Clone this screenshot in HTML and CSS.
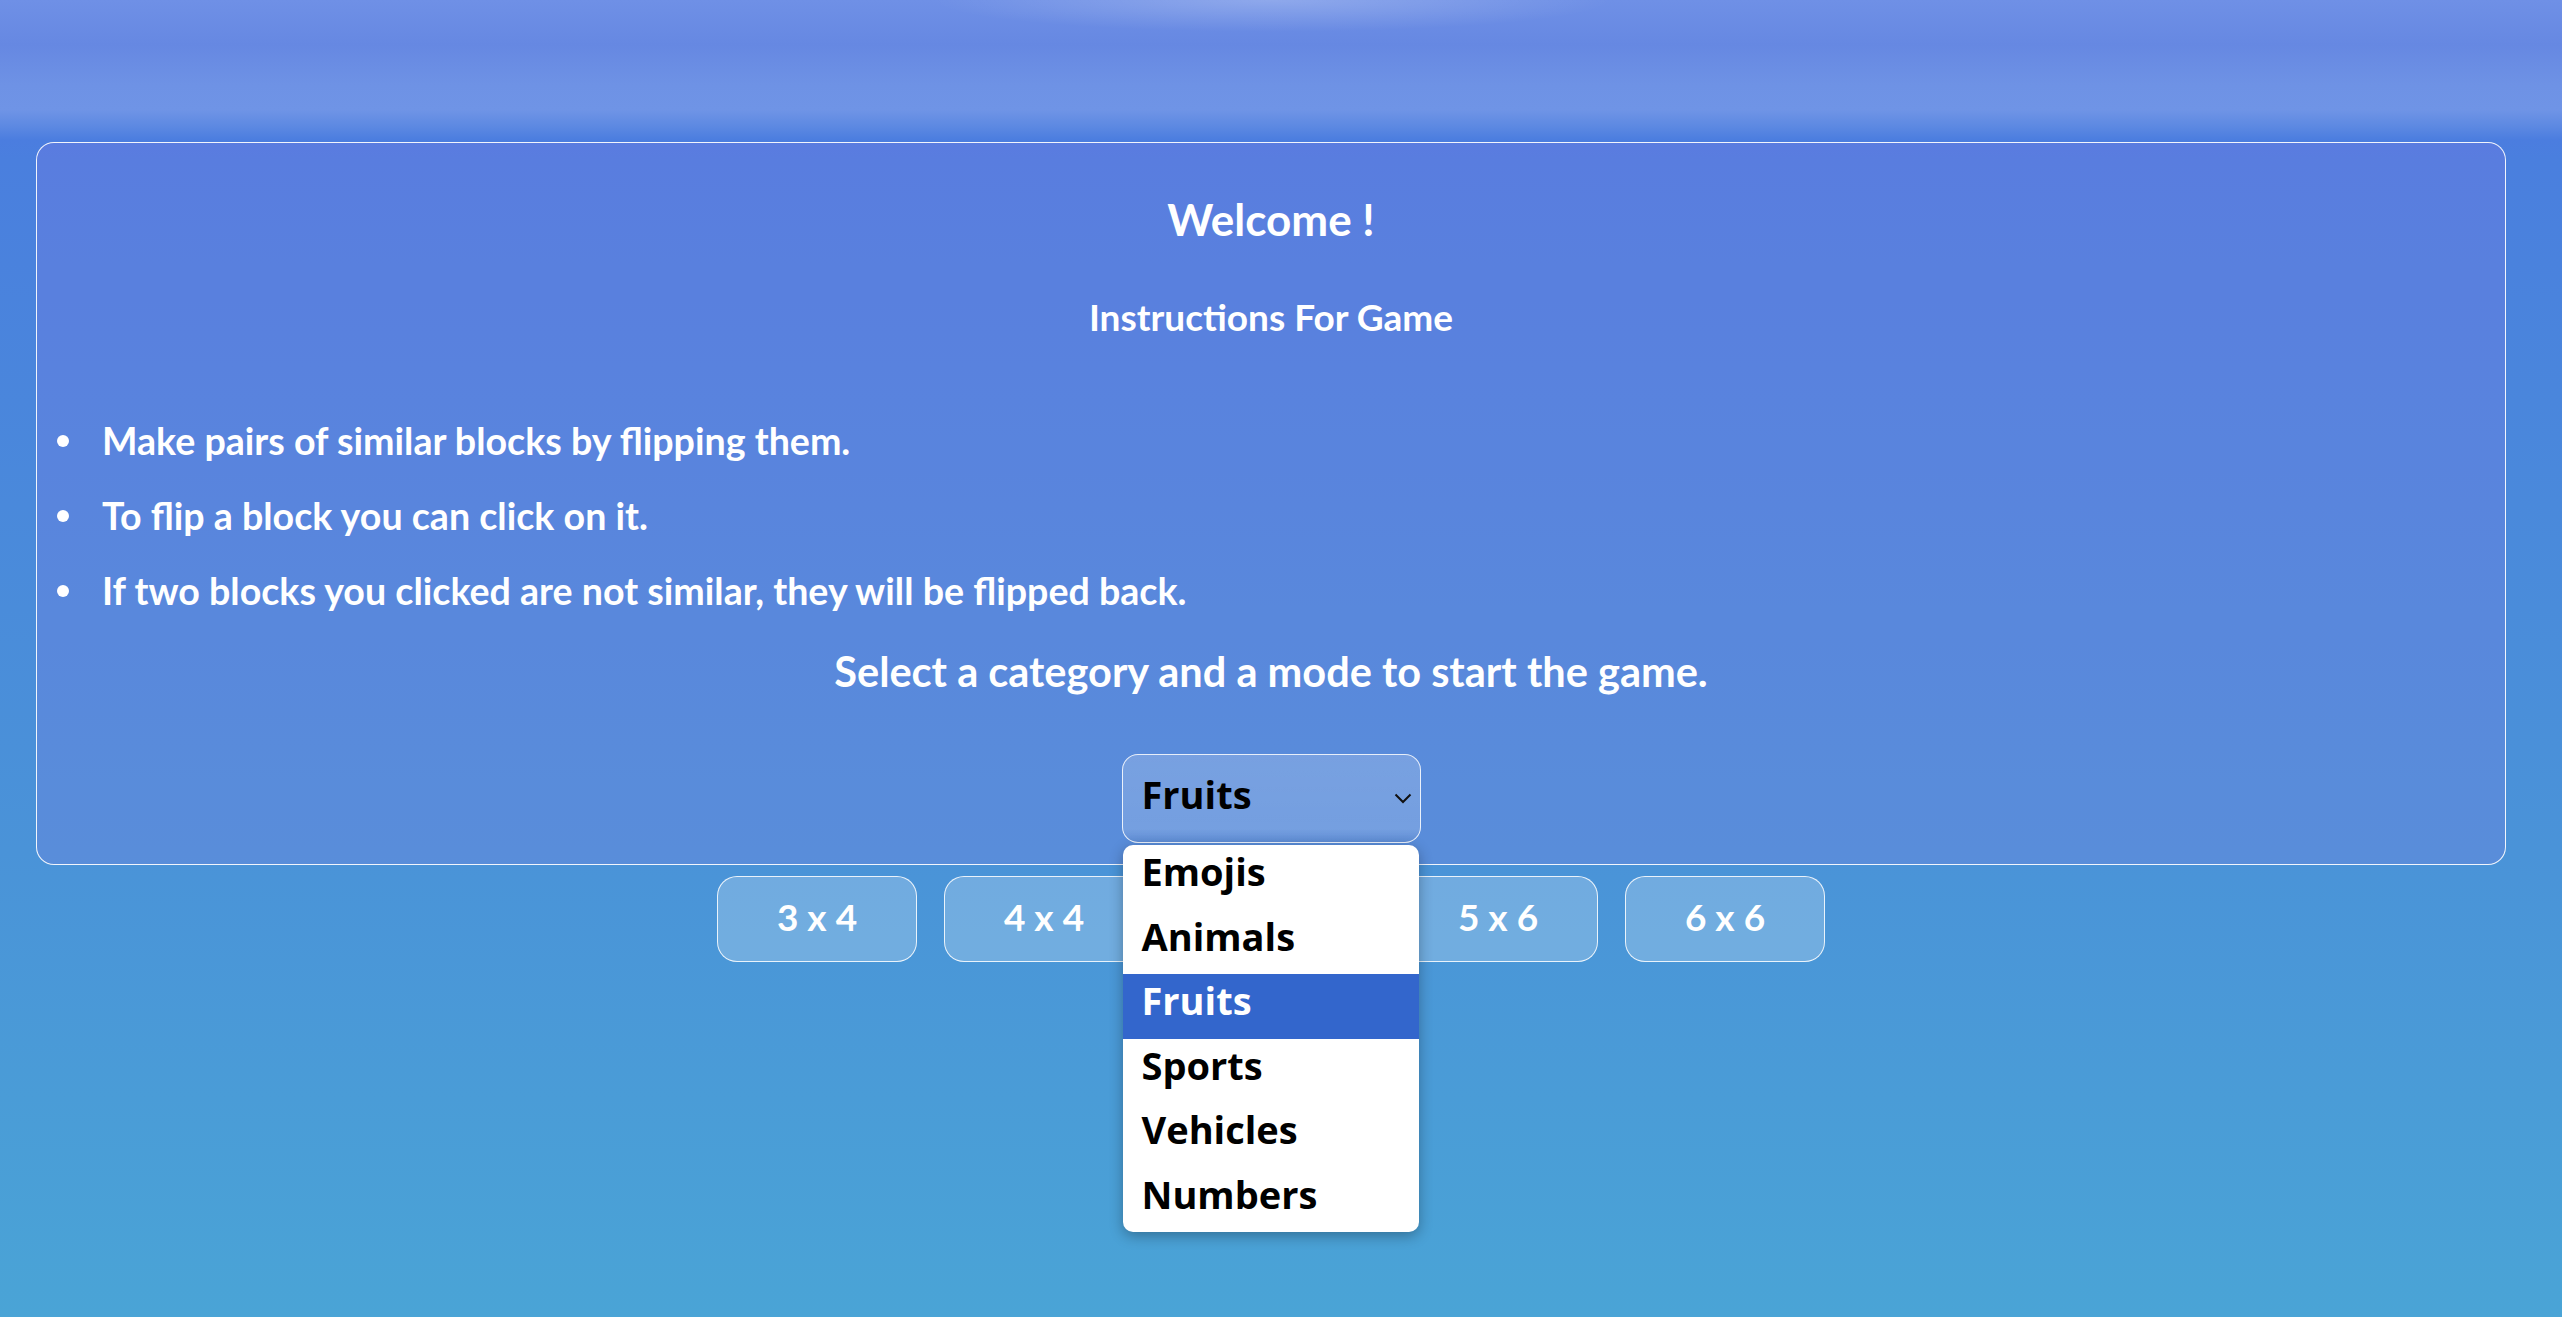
FILE: index.html
```html
<!DOCTYPE html>
<html lang="en">
<head>
<meta charset="utf-8">
<title>Memory Game</title>
<link rel="stylesheet" href="styles.css">
</head>
<body>
<main class="card">
  <h1 class="title">Welcome !</h1>
  <h3 class="subtitle">Instructions For Game</h3>
  <ul class="rules">
    <li>Make pairs of similar blocks by flipping them.</li>
    <li>To flip a block you can click on it.</li>
    <li>If two blocks you clicked are not similar, they will be flipped back.</li>
  </ul>
  <p class="prompt">Select a category and a mode to start the game.</p>
  <div class="picker">
    <div class="select">
      <span class="select-value">Fruits</span>
      <svg class="chevron" width="18" height="11" viewBox="0 0 18 11"><path d="M1.5 1.5 L9 9 L16.5 1.5" fill="none" stroke="#111" stroke-width="2"/></svg>
    </div>
    <div class="options">
      <div class="option">Emojis</div>
      <div class="option">Animals</div>
      <div class="option selected">Fruits</div>
      <div class="option">Sports</div>
      <div class="option">Vehicles</div>
      <div class="option">Numbers</div>
    </div>
  </div>
</main>
<div class="modes">
  <button class="mode">3 x 4</button>
  <button class="mode">4 x 4</button>
  <button class="mode">4 x 5</button>
  <button class="mode">5 x 6</button>
  <button class="mode">6 x 6</button>
</div>
</body>
</html>
```
FILE: styles.css
```css
html, body {
  margin: 0;
  height: 100%;
}
body {
  font-family: Lato, "Open Sans", sans-serif;
  font-weight: 700;
  color: #fff;
  overflow: hidden;
  background:
    radial-gradient(ellipse 340px 32px at 1272px 0px, rgba(255,255,255,0.22), rgba(255,255,255,0) 100%),
    linear-gradient(to bottom, #6f90e6 0px, #6688e2 45px, #6e92e5 85px, #6f94e6 110px, #5d89e2 126px, #4b7ddf 140px, #4a7fde 160px, #4a93d8 850px, #4aa4d6 1317px);
  background-repeat: no-repeat;
}
.card {
  box-sizing: border-box;
  width: 2470px;
  height: 723px;
  margin: 142px 0 0 36px;
  padding-top: 46px;
  border: 1.5px solid rgba(255,255,255,0.92);
  border-radius: 18px;
  background: rgba(150,120,230,0.2);
}
.title {
  margin: 0;
  font-size: 44px;
  line-height: 60px;
  text-align: center;
  font-weight: 700;
}
.subtitle {
  margin: 43px 0 0;
  font-size: 37px;
  line-height: 50px;
  text-align: center;
  font-weight: 700;
}
.rules {
  margin: 61px 0 0;
  padding: 0;
  list-style: none;
  font-size: 37.6px;
  line-height: 75px;
}
.rules li {
  position: relative;
  padding-left: 65px;
}
.rules li::before {
  content: "";
  position: absolute;
  left: 20px;
  top: 32px;
  width: 12px;
  height: 12px;
  border-radius: 50%;
  background: #fff;
}
.prompt {
  margin: 18px 0 0;
  font-size: 41.5px;
  line-height: 50px;
  text-align: center;
}
.picker {
  position: relative;
  width: 299px;
  margin: 58px auto 0;
}
.select {
  box-sizing: border-box;
  height: 89px;
  display: flex;
  align-items: center;
  justify-content: space-between;
  padding: 0 8px 10px 19px;
  border: 1px solid rgba(255,255,255,0.85);
  border-radius: 16px;
  background: linear-gradient(to bottom, rgba(255,255,255,0.19), rgba(255,255,255,0.17) 85%, rgba(120,140,190,0.2));
  color: #000;
  font-family: "Open Sans", Lato, sans-serif;
  font-size: 38px;
}
.chevron {
  margin-top: 10px;
}
.options {
  position: absolute;
  left: 1px;
  top: 91px;
  width: 296px;
  background: #fff;
  border-radius: 10px;
  overflow: hidden;
  box-shadow: 0 4px 14px rgba(0,0,0,0.3);
  z-index: 5;
}
.option {
  box-sizing: border-box;
  height: 64.5px;
  line-height: 52px;
  padding: 0 0 12.5px 19px;
  color: #000;
  font-family: "Open Sans", Lato, sans-serif;
  font-size: 38px;
}
.option.selected {
  background: #3366cc;
  color: #fff;
}
.modes {
  box-sizing: border-box;
  width: 2470px;
  margin: 11px 0 0 36px;
  display: flex;
  justify-content: center;
  gap: 27px;
}
.mode {
  box-sizing: border-box;
  width: 200px;
  height: 86px;
  padding: 0 0 6px;
  border: 1px solid rgba(255,255,255,0.85);
  border-radius: 20px;
  background: rgba(255,255,255,0.22);
  color: #fff;
  font-family: Lato, "Open Sans", sans-serif;
  font-weight: 700;
  font-size: 37px;
}
```
